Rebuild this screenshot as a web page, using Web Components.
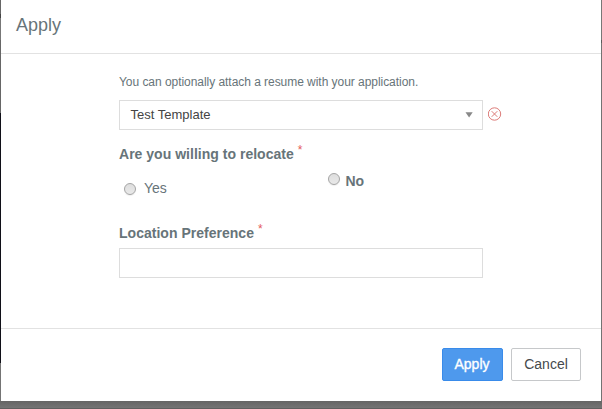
<!DOCTYPE html>
<html lang="en"><head><meta charset="utf-8"><title>Apply</title>
<style>
html,body{margin:0;width:602px;height:409px;overflow:hidden}
body{font-family:"Liberation Sans",Arial,sans-serif;color:#677479;background:#707070}
</style></head><body>
<apply-dialog></apply-dialog>
<script>
const define=(name,html)=>customElements.define(name,class extends HTMLElement{
  constructor(){super();this.attachShadow({mode:'open'}).innerHTML=html;}
});
define('app-button',`<style>
:host{display:block}
button{display:block;box-sizing:border-box;width:100%;height:33px;padding:0;border:1px solid #c6c8ca;border-radius:2px;background:#fff;color:#45494c;font:14px/29px "Liberation Sans",Arial,sans-serif;white-space:nowrap}
:host([primary]) button{background:#4e99ed;border-color:#398bea;color:#fff;-webkit-text-stroke:.35px #fff;padding-right:1px}
</style><button><slot></slot></button>`);
define('field-label',`<style>
:host{display:flex;font-weight:bold;font-size:14px;line-height:18px;letter-spacing:.02px;white-space:nowrap}
i{font:normal 12px/14px "Liberation Sans",Arial,sans-serif;color:#e45b5b;margin:-2px 0 0 4px}
</style><span><slot></slot></span><i>*</i>`);
define('radio-option',`<style>
:host{display:flex;align-items:flex-start;font-size:14px;line-height:18px}
b{box-sizing:border-box;width:12px;height:12px;border:1px solid #a4a4a4;border-radius:50%;background:linear-gradient(#dedede,#e9e9e9);box-shadow:0 1px 1px #0001;margin-top:var(--dot-top,4px);margin-right:var(--dot-gap,8px)}
</style><b></b><span><slot></slot></span>`);
define('select-box',`<style>
:host{box-sizing:border-box;display:flex;align-items:center;justify-content:space-between;width:364px;height:30px;border:1px solid #ddd;padding:0 9px 0 10.5px;font-size:13px;color:#444;background:#fff}
span{padding-bottom:2px}
svg{display:block}
</style><span><slot></slot></span><svg width="8" height="6"><path d="M.5.3h7.2L4.1 5.5z" fill="#888"/></svg>`);
define('text-box',`<style>
:host{display:block}
input{display:block;box-sizing:border-box;width:364px;height:30px;border:1px solid #ddd;padding:0 10px;background:#fff;outline:0}
</style><input aria-label="Location Preference">`);
define('clear-icon',`<style>:host{display:block;width:14px;height:14px}svg{display:block}</style>
<svg width="14" height="14" fill="none" stroke="#dc7b78"><circle cx="6.5" cy="7" r="6.2"/><path d="M3.7 4.2l5.6 5.6M9.3 4.2l-5.6 5.6"/></svg>`);
define('apply-dialog',`<style>
:host{display:grid;grid-template-columns:1px 600px 1px;grid-template-rows:401px 8px;width:602px;height:409px}
.left{background:linear-gradient(#666 0 14px,#444 14px 18px,#777 18px 40px,#666 40px 113px,#101018 113px 363px,#747474 363px)}
.right{background:linear-gradient(#777 0 40px,#5a5a5a 40px 43px,#737373 43px)}
.bottom{grid-column:1/4;background:linear-gradient(#656565,#747474 7px,#606060 7px)}
.modal{display:grid;grid-template-rows:53px 276px 72px;background:#fff}
header{box-sizing:border-box;padding:14px 0 0 15px;font-size:18px;line-height:22px}
main{box-sizing:border-box;border:solid #e2e2e2;border-width:1px 0;padding:20px 0 0 118px}
.hint{font-size:12px;line-height:16px;letter-spacing:-.045px;white-space:nowrap}
.row{display:flex;align-items:flex-start;gap:5px;margin-top:10px}
clear-icon{margin-top:7px}
.q1{margin-top:15px}
.q2{margin-top:16px}
.radios{display:grid;grid-template-columns:209px 1fr;height:45px}
.yes{margin:16px 0 0 5px}
.no{font-weight:bold;margin-top:9px;--dot-top:1px;--dot-gap:5.5px}
text-box{margin-top:6px}
footer{display:flex;justify-content:flex-end;gap:8px;padding:19px 20px 0 0}
.ok{width:61px}.cancel{width:70px}
</style>
<div class="left"></div>
<section class="modal">
<header>Apply</header>
<main><div class="hint">You can optionally attach a resume with your application.</div>
<div class="row"><select-box>Test Template</select-box><clear-icon></clear-icon></div>
<field-label class="q1">Are you willing to relocate</field-label>
<div class="radios"><radio-option class="yes">Yes</radio-option><radio-option class="no">No</radio-option></div>
<field-label class="q2">Location Preference</field-label>
<text-box></text-box></main>
<footer><app-button class="ok" primary>Apply</app-button><app-button class="cancel">Cancel</app-button></footer>
</section><div class="right"></div><div class="bottom"></div>`);
</script></body></html>
